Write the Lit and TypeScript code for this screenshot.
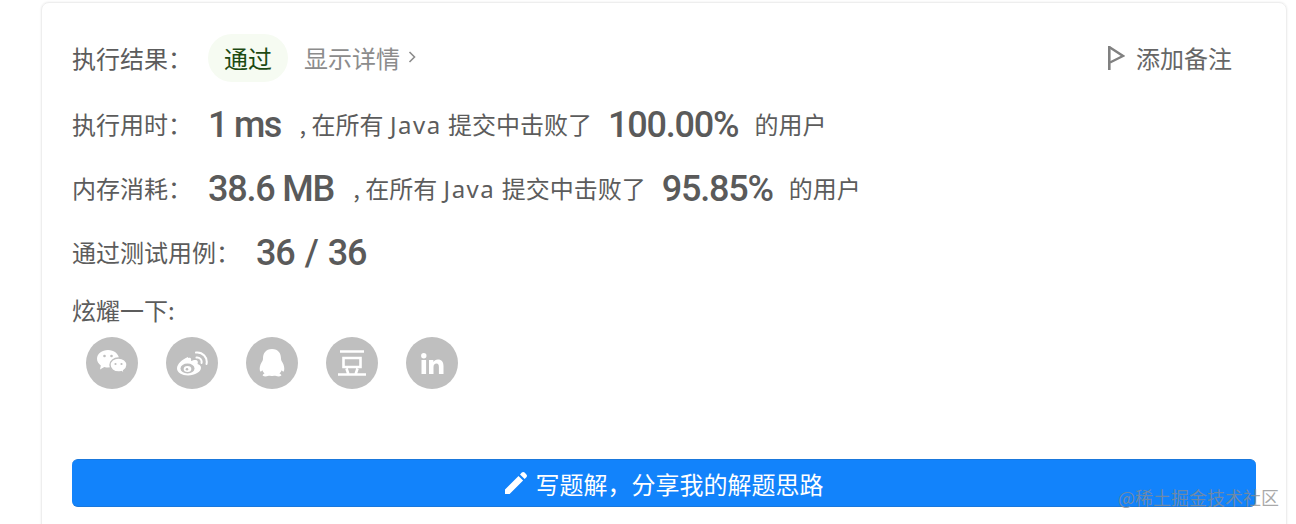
import { LitElement, html, css } from 'lit';
import { customElement } from 'lit/decorators.js';

@customElement('app-root')
export class AppRoot extends LitElement {
  static styles = css`
    :host {
      display: block;
      height: 524px;
      overflow: hidden;
      background: #fff;
      position: relative;
      font-family: 'Noto Sans CJK SC', 'Noto Sans', sans-serif;
      color: #5c5c5c;
      font-size: 24px;
    }
    .card {
      margin: 2px 9px 0 41px;
      height: 560px;
      box-sizing: border-box;
      padding: 31px 30px 0 30px;
      border: 1px solid #eee;
      border-radius: 8px;
      box-shadow: 0 0 2px rgba(0, 0, 0, 0.1);
    }
    .row {
      display: flex;
      align-items: center;
      height: 48px;
      margin-bottom: 16px;
      white-space: nowrap;
    }
    .row.first {
      margin-bottom: 17px;
    }
    .row.first > * {
      padding-bottom: 2px;
    }
    .label {
      flex: none;
      width: 136px;
    }
    .label.wide {
      width: 184px;
    }
    .pill {
      width: 80px;
      height: 48px;
      box-sizing: border-box;
      border-radius: 24px;
      background: #f6fbf2;
      color: #1d4a12;
      display: flex;
      align-items: center;
      justify-content: center;
    }
    .detail {
      margin-left: 16px;
      color: #8c8c8c;
      display: flex;
      align-items: center;
      gap: 8px;
    }
    .note {
      margin-left: auto;
      margin-right: 24px;
      display: flex;
      align-items: center;
      gap: 11px;
      color: #666;
    }
    .note svg {
      margin-top: 2px;
    }
    .big {
      font-family: 'Roboto', sans-serif;
      font-weight: 500;
      font-size: 36px;
      letter-spacing: -1.2px;
      color: #5a5a5a;
      padding-top: 3px;
    }
    .big.spaced {
      word-spacing: 2.500px;
    }
    .big.tight {
      letter-spacing: -1.700px;
    }
    .text {
      margin-left: 19px;
    }
    .end {
      margin-left: 16px;
    }
    .rate {
      margin-left: 16px;
    }
    .latin {
      font-family: 'Noto Sans', sans-serif;
      letter-spacing: 1.500px;
      margin: 0 1px;
    }
    .share-label {
      height: 36px;
      margin-top: 2px;
      display: flex;
      align-items: center;
    }
    .icons {
      display: flex;
      gap: 28px;
      margin: 10px 0 0 14px;
    }
    .icon {
      width: 52px;
      height: 52px;
      border-radius: 50%;
      background: #bfbfbf;
      display: flex;
      align-items: center;
      justify-content: center;
    }
    .solution {
      margin-top: 70px;
      height: 48px;
      border-radius: 6px;
      background: #1283fb;
      border-top: 1px solid #1a78dc;
      border-bottom: 1px solid #1a78dc;
      box-sizing: border-box;
      color: #fff;
      display: flex;
      align-items: center;
      justify-content: center;
      gap: 9px;
    }
    .watermark {
      position: absolute;
      left: 1118px;
      top: 484px;
      font-size: 18px;
      line-height: 26px;
      color: rgba(140, 140, 140, 0.75);
      white-space: nowrap;
    }
  `;

  render() {
    return html`
      <div class="card">
        <div class="row first">
          <span class="label">执行结果：</span>
          <span class="pill">通过</span>
          <span class="detail">显示详情
            <svg width="8" height="12" viewBox="0 0 8 12"><path d="M1.500 1l5 5-5 5" fill="none" stroke="#8c8c8c" stroke-width="1.600"/></svg>
          </span>
          <span class="note">
            <svg width="17" height="24" viewBox="0 0 17 24"><path d="M1.300 0v24" stroke="#808080" stroke-width="2.600"/><path d="M2 1.500L15 10 2 16.500" fill="none" stroke="#808080" stroke-width="2.400"/></svg>
            添加备注
          </span>
        </div>
        <div class="row">
          <span class="label">执行用时：</span>
          <span class="big tight">1 ms</span>
          <span class="text">, 在所有 <span class="latin">Java</span> 提交中击败了</span>
          <span class="big rate">100.00%</span>
          <span class="end">的用户</span>
        </div>
        <div class="row">
          <span class="label">内存消耗：</span>
          <span class="big">38.6 MB</span>
          <span class="text">, 在所有 <span class="latin">Java</span> 提交中击败了</span>
          <span class="big rate">95.85%</span>
          <span class="end">的用户</span>
        </div>
        <div class="row">
          <span class="label wide">通过测试用例：</span>
          <span class="big spaced">36 / 36</span>
        </div>
        <div class="share-label">炫耀一下:</div>
        <div class="icons">
          <span class="icon">
            <svg width="30" height="26" viewBox="0 0 30 26" fill="#fff">
              <path d="M11 0C5 0 0 3.800 0 8.800c0 2.800 1.500 5 3.800 6.700L3 19.500l4.300-2.600c1.200.4 2.400.6 3.700.6 6 0 11-3.900 11-8.700S17 0 11 0z"/>
              <path d="M30 15c0-3.900-3.800-7-8.500-7S13 11.100 13 15s3.800 7 8.500 7c1 0 2-.1 2.900-.4l2.900 2-.7-3C28.500 19.400 30 17.400 30 15z" stroke="#bfbfbf" stroke-width="1.400"/>
              <circle cx="7.500" cy="6" r="1.300" fill="#bfbfbf"/><circle cx="14.500" cy="6" r="1.300" fill="#bfbfbf"/>
              <circle cx="18.500" cy="14" r="1.100" fill="#bfbfbf"/><circle cx="24.500" cy="14" r="1.100" fill="#bfbfbf"/>
            </svg>
          </span>
          <span class="icon">
            <svg width="32" height="25" viewBox="0 0 32 25">
              <path d="M12 6C6 8.500 1 13 1 17.500c0 4 5 7 11 7 7 0 13-3.700 13-7.700 0-2.300-2-3.300-3.500-3.800.6-1.700.4-3-.5-3.600-1.300-.9-4-.3-6 .7 0 0 .5-2.200-.5-3-.7-.5-1.500-.4-2.500 0z" fill="#fff"/>
              <ellipse cx="11.500" cy="17.500" rx="7" ry="5" fill="#bfbfbf"/>
              <ellipse cx="11.500" cy="18" rx="3.800" ry="3" fill="#fff"/>
              <circle cx="11" cy="18.300" r="1.300" fill="#bfbfbf"/>
              <path d="M20.500 6.500a4.500 4.500 0 015 5.500M20 1.500a9.500 9.500 0 0110.500 11.500" fill="none" stroke="#fff" stroke-width="2" stroke-linecap="round"/>
            </svg>
          </span>
          <span class="icon">
            <svg width="26" height="28" viewBox="0 0 26 28" fill="#fff">
              <path d="M13 0C6.500 0 4 4.500 4 9.500c0 1.500-.5 2.600-1.500 4C1 16 .2 19.500 1 22c.4 1 1.400.5 2.300-.7.500 1.300 1.200 2.400 2.200 3.300-1.300.5-2 1.200-1.800 2 .3 1 3.500 1 6 .2 1.300.2 5.300.2 6.600 0 2.500.8 5.700.8 6-.2.200-.8-.5-1.500-1.800-2 1-.9 1.700-2 2.200-3.300.9 1.200 1.900 1.700 2.300.7.800-2.500 0-6-1.500-8.500-1-1.400-1.500-2.500-1.500-4C22 4.500 19.500 0 13 0z"/>
            </svg>
          </span>
          <span class="icon">
            <svg width="28" height="26" viewBox="0 0 28 26" fill="none" stroke="#fff" stroke-width="2.600">
              <path d="M2 1.500h24M5.500 8h17v9h-17zM0 24.500h28M8.500 18.500l2 6M19.500 18.500l-2 6"/>
            </svg>
          </span>
          <span class="icon">
            <svg width="23" height="21" viewBox="0 0 23 21" fill="#fff">
              <rect x="0.500" y="7" width="4.600" height="14"/>
              <circle cx="2.800" cy="2.700" r="2.700"/>
              <path d="M8 7h4.400v2c.9-1.400 2.300-2.400 4.400-2.400 4 0 5.700 2.500 5.700 6.500V21h-4.600v-7c0-2-.6-3.400-2.400-3.400-1.900 0-3 1.300-3 3.400v7H8z"/>
            </svg>
          </span>
        </div>
        <div class="solution">
          <svg width="22" height="22" viewBox="0 0 22 22" fill="#fff"><path d="M0 22v-4.600L13.500 3.900l4.600 4.600L4.600 22zM15 2.400L16.800.6c.8-.8 2-.8 2.800 0l1.800 1.800c.8.8.8 2 0 2.800l-1.800 1.800z"/></svg>
          写题解，分享我的解题思路
        </div>
      </div>
      <div class="watermark">@稀土掘金技术社区</div>
    `;
  }
}
